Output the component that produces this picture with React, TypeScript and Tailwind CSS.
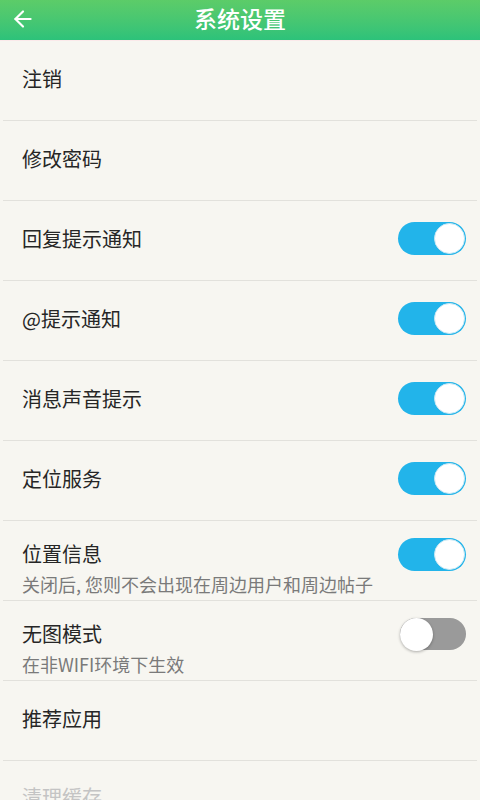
import { ArrowLeft } from 'lucide-react';

type Row = { title: string; sub?: string; toggle?: boolean };

const rows: Row[] = [
  { title: '注销' },
  { title: '修改密码' },
  { title: '回复提示通知', toggle: true },
  { title: '@提示通知', toggle: true },
  { title: '消息声音提示', toggle: true },
  { title: '定位服务', toggle: true },
  { title: '位置信息', sub: '关闭后, 您则不会出现在周边用户和周边帖子', toggle: true },
  { title: '无图模式', sub: '在非WIFI环境下生效', toggle: false },
  { title: '推荐应用' },
];

function Toggle({ on }: { on: boolean }) {
  return on ? (
    <div className="w-[68px] h-[33px] rounded-full bg-[#22b4ea] flex items-center justify-end p-[1px]">
      <div className="w-[31px] h-[31px] rounded-full bg-white border border-[#c9e8f3]" />
    </div>
  ) : (
    <div className="w-[66px] h-[32px] rounded-full bg-[#9a9a9a] flex items-center justify-start">
      <div className="w-[33px] h-[33px] rounded-full bg-white shadow-[0_1px_3px_rgba(0,0,0,0.3)]" />
    </div>
  );
}

export default function App() {
  return (
    <div className="w-[480px] h-[800px] overflow-hidden bg-[#f7f6f1] font-['Noto_Sans_CJK_SC','Noto_Sans',sans-serif]">
      <div className="h-[41px] bg-gradient-to-b from-[#5ccc68] to-[#2cc27a] flex items-center relative border-b border-[#fbe9ea]">
        <ArrowLeft className="absolute left-[10px] top-[6px] text-white" size={26} strokeWidth={2} />
        <h1 className="flex-1 text-center text-white text-[23px] font-medium leading-none -mt-[4px]">系统设置</h1>
      </div>
      {rows.map((r) =>
        r.sub ? (
          <div key={r.title} className="h-[80px] mx-[3px] border-b border-[#e2e1dc] flex flex-col pl-[19px] pr-[11px] pt-[19px]">
            <div className="flex items-center justify-between h-[28px]">
              <span className="text-[20px] text-[#262626] leading-[28px]">{r.title}</span>
              <Toggle on={!!r.toggle} />
            </div>
            <span className="text-[18px] text-[#7a7a7a] leading-[24px] mt-[4px]">{r.sub}</span>
          </div>
        ) : (
          <div key={r.title} className="h-[80px] mx-[3px] border-b border-[#e2e1dc] flex items-center justify-between pl-[19px] pr-[11px] pb-[4px]">
            <span className="text-[20px] text-[#262626] leading-[28px]">{r.title}</span>
            {r.toggle !== undefined && <Toggle on={r.toggle} />}
          </div>
        )
      )}
      <div className="h-[80px] pl-[22px] pt-[22px]">
        <span className="text-[20px] text-[#c4c4c4] leading-[28px]">清理缓存</span>
      </div>
    </div>
  );
}
